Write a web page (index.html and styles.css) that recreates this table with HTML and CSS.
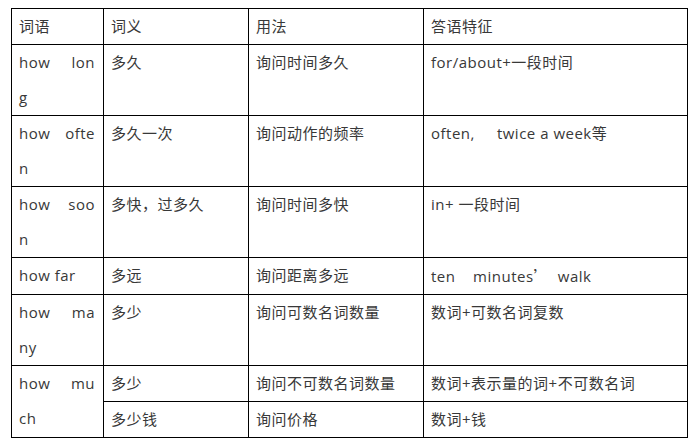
FILE: index.html
```html
<!DOCTYPE html>
<html lang="zh">
<head>
<meta charset="utf-8">
<link rel="stylesheet" href="styles.css">
</head>
<body>
<table class="grid">
  <colgroup>
    <col class="c1"><col class="c2"><col class="c3"><col class="c4">
  </colgroup>
  <tr>
    <td>词语</td><td>词义</td><td>用法</td><td>答语特征</td>
  </tr>
  <tr>
    <td><div class="split"><span>how</span><span>lon</span></div><div>g</div></td>
    <td>多久</td><td>询问时间多久</td><td>for/about+一段时间</td>
  </tr>
  <tr>
    <td><div class="split"><span>how</span><span>ofte</span></div><div>n</div></td>
    <td>多久一次</td><td>询问动作的频率</td><td>often,&nbsp;&nbsp;&nbsp;&nbsp; twice a week等</td>
  </tr>
  <tr>
    <td><div class="split"><span>how</span><span>soo</span></div><div>n</div></td>
    <td>多快，过多久</td><td>询问时间多快</td><td>in+ 一段时间</td>
  </tr>
  <tr>
    <td>how far</td><td>多远</td><td>询问距离多远</td><td>ten&nbsp;&nbsp;&nbsp; minutes<span class="cjk">’</span>&nbsp; walk</td>
  </tr>
  <tr>
    <td><div class="split"><span>how</span><span>ma</span></div><div>ny</div></td>
    <td>多少</td><td>询问可数名词数量</td><td>数词+可数名词复数</td>
  </tr>
  <tr>
    <td rowspan="2"><div class="split"><span>how</span><span>mu</span></div><div>ch</div></td>
    <td>多少</td><td>询问不可数名词数量</td><td>数词+表示量的词+不可数名词</td>
  </tr>
  <tr>
    <td>多少钱</td><td>询问价格</td><td>数词+钱</td>
  </tr>
</table>
</body>
</html>
```

FILE: styles.css
```css
html, body {
  margin: 0;
  background: #ffffff;
}
body {
  padding: 8px 0 0 11px;
  font-family: "Open Sans", "Noto Sans CJK SC", sans-serif;
  font-size: 15px;
  letter-spacing: 0.5px;
  color: #383838;
}
.grid {
  border-collapse: collapse;
  table-layout: fixed;
  width: 676px;
}
.c1 { width: 92px; }
.c2 { width: 145px; }
.c3 { width: 175px; }
.c4 { width: 264px; }
.grid td {
  border: 1px solid #000;
  padding: 0 8px 0 7px;
  line-height: 35px;
  vertical-align: top;
  white-space: nowrap;
}
.split {
  display: flex;
  justify-content: space-between;
}
.cjk {
  font-family: "Noto Sans CJK SC", sans-serif;
}
```
